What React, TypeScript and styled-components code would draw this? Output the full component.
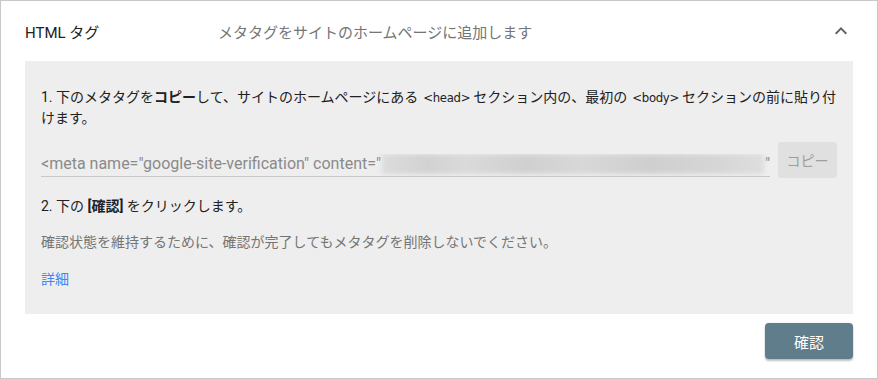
import styled, { createGlobalStyle } from 'styled-components';

const GlobalStyle = createGlobalStyle`
  html, body {
    margin: 0;
    padding: 0;
    background: #fff;
  }
  body {
    font-family: Roboto, "Noto Sans CJK JP", sans-serif;
    color: #212121;
  }
`;

const Card = styled.div`
  box-sizing: border-box;
  width: 878px;
  height: 379px;
  border: 1px solid #c8c8c8;
  padding: 0 24px;
  display: flex;
  flex-direction: column;
`;

const Header = styled.div`
  height: 60px;
  display: flex;
  align-items: center;
`;

const Title = styled.div`
  width: 193px;
  font-size: 15px;
  color: #212121;
`;

const Subtitle = styled.div`
  flex: 1;
  font-size: 15px;
  color: #757575;
`;

const Chevron = styled.svg`
  width: 24px;
  height: 24px;
  fill: #5f6368;
`;

const Panel = styled.div`
  background: #eeeeee;
  padding: 26px 16px 25px;
  display: flex;
  flex-direction: column;
`;

const Step = styled.p`
  margin: 0;
  font-size: 14px;
  line-height: 20px;
  color: #212121;
`;

const Code = styled.code`
  font-family: "DejaVu Sans Condensed", sans-serif;
  font-size: 13px;
  letter-spacing: -0.3px;
  margin: 0 3px 0 5px;
`;

const MetaRow = styled.div`
  display: flex;
  align-items: flex-end;
  gap: 8px;
  margin: 14px 0 18px;
`;

const MetaField = styled.div`
  flex: 1;
  min-width: 0;
  margin-bottom: 1px;
  padding-bottom: 2px;
  border-bottom: 1px solid #c8c8c8;
  font-size: 16px;
  line-height: 20px;
  color: #8a8a8a;
  white-space: nowrap;
  overflow: hidden;
  display: flex;
  align-items: center;
`;

const Blurred = styled.span`
  flex: 1;
  min-width: 0;
  height: 20px;
  margin: 0 1px;
  background: linear-gradient(
    90deg,
    #dcdcdc 0%,
    #d2d2d2 12%,
    #dadada 22%,
    #d0d0d0 38%,
    #d8d8d8 52%,
    #cfcfcf 70%,
    #d6d6d6 88%,
    #dedede 100%
  );
  filter: blur(2px);
`;

const CopyButton = styled.button`
  width: 59px;
  height: 36px;
  border: none;
  border-radius: 3px;
  background: #e0e0e0;
  color: #9e9e9e;
  font-family: Roboto, "Noto Sans CJK JP", sans-serif;
  font-size: 14px;
  padding: 0;
`;

const Note = styled.p`
  margin: 16px 0 0;
  font-size: 14px;
  line-height: 20px;
  color: #757575;
`;

const Link = styled.a`
  margin-top: 17px;
  font-size: 14px;
  line-height: 20px;
  color: #4285f4;
  text-decoration: none;
`;

const Footer = styled.div`
  display: flex;
  justify-content: flex-end;
  margin-top: 9px;
`;

const ConfirmButton = styled.button`
  width: 88px;
  height: 36px;
  border: none;
  border-radius: 4px;
  background: #607d8b;
  color: #fff;
  font-family: Roboto, "Noto Sans CJK JP", sans-serif;
  font-size: 15px;
  box-shadow: 0 2px 2px rgba(0, 0, 0, 0.24), 0 0 2px rgba(0, 0, 0, 0.12);
`;

const App = () => {
  return (
    <>
      <GlobalStyle />
      <Card>
        <Header>
          <Title>HTML タグ</Title>
          <Subtitle>メタタグをサイトのホームページに追加します</Subtitle>
          <Chevron viewBox="0 0 24 24">
            <path d="M12 8l-6 6 1.41 1.41L12 10.83l4.59 4.58L18 14z" />
          </Chevron>
        </Header>
        <Panel>
          <Step>
            1. 下のメタタグを<b>コピー</b>して、サイトのホームページにある<Code>&lt;head&gt;</Code>セクション内の、最初の<Code>&lt;body&gt;</Code>セクションの前に貼り付けます。
          </Step>
          <MetaRow>
            <MetaField>
              <span>&lt;meta name="google-site-verification" content="</span>
              <Blurred />
              <span>"</span>
            </MetaField>
            <CopyButton>コピー</CopyButton>
          </MetaRow>
          <Step>
            2. 下の <b>[確認]</b> をクリックします。
          </Step>
          <Note>確認状態を維持するために、確認が完了してもメタタグを削除しないでください。</Note>
          <Link href="#">詳細</Link>
        </Panel>
        <Footer>
          <ConfirmButton>確認</ConfirmButton>
        </Footer>
      </Card>
    </>
  );
};

export default App;
